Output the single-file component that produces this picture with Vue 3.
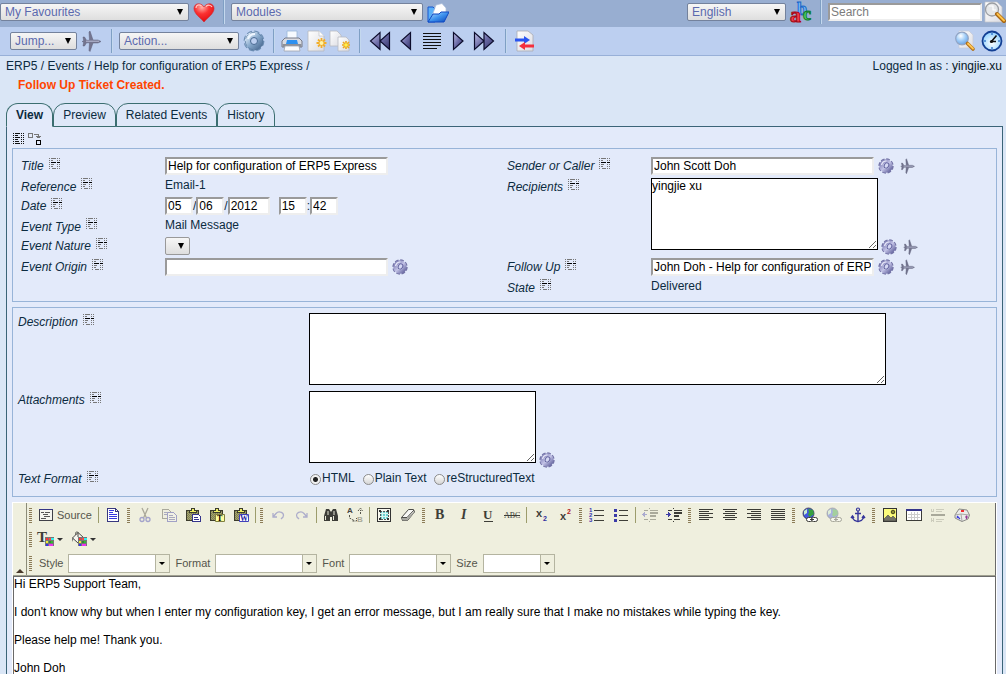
<script setup>
import { ref } from 'vue'

const tabs = ['View', 'Preview', 'Related Events', 'History']
const title = ref('Help for configuration of ERP5 Express')
const sender = ref('John Scott Doh')
const recipients = ref('yingjie xu')
const followUp = ref('John Doh - Help for configuration of ERP5 Express')
const format = ref('HTML')
const formats = ['HTML', 'Plain Text', 'reStructuredText']

const tools = [
  'doc', '|g', 'cut', 'copy', 'paste', 'pastetext', 'pasteword', '|s', '|g', 'undo', 'redo', '|s',
  'find', 'replace', '|s', 'selectall', 'eraser', '|g', 'bold', 'italic', 'underline', 'strike', '|s',
  'subscript', 'superscript', '|g', 'ol', 'ul', '|s', 'outdent', 'indent', '|g',
  'left', 'center', 'right', 'justify', '|g', 'link', 'unlink', 'anchor', '|g',
  'image', 'table', 'rule', 'universal'
]

// Letters drawn on top of the icon shapes: text, x, baseline, size, colour, style class
const letters = {
  pastetext: [['T', 8, 14, 8, '#000', 'serif']],
  pasteword: [['W', 7, 14, 8, '#26269f', 'serif']],
  replace: [['A', 0, 6, 8, '#454540', 'sans'], ['B', 10, 15, 8, '#a8a898', 'sans']],
  bold: [['B', 3, 12, 14, '#3e3e38', 'serif']],
  italic: [['I', 5, 12, 14, '#3e3e38', 'serif slant']],
  underline: [['U', 3, 12, 13, '#3e3e38', 'serif']],
  strike: [['ABC', 0, 11, 8, '#3e3e38', 'thin']],
  subscript: [['x', 3, 10, 11, '#3e3e38', 'sans'], ['2', 10, 14, 7, '#3030a0', 'sans']],
  superscript: [['x', 3, 13, 11, '#3e3e38', 'sans'], ['2', 10, 7, 7, '#b02020', 'sans']],
  ol: [['1', 0, 5, 6, '#3535b0', 'sans'], ['2', 0, 10, 6, '#3535b0', 'sans'], ['3', 0, 15, 6, '#3535b0', 'sans']]
}

const combos = [
  { name: 'Style', wide: true },
  { name: 'Format', wide: true },
  { name: 'Font', wide: true },
  { name: 'Size', wide: false }
]
</script>

<template>
  <div class="page">
    <svg class="sprite" aria-hidden="true">
      <defs>
        <linearGradient id="gNav" x1="0" y1="0" x2="1" y2="1"><stop offset="0" stop-color="#c4c4ea" /><stop offset=".5" stop-color="#6b6ba6" /><stop offset="1" stop-color="#35356b" /></linearGradient>
        <radialGradient id="gHeart" cx=".4" cy=".2" r=".8"><stop offset="0" stop-color="#ffb0a8" /><stop offset=".45" stop-color="#fb3232" /><stop offset="1" stop-color="#e00a10" /></radialGradient>
        <linearGradient id="gFolder" x1="0" y1="0" x2="1" y2="1"><stop offset="0" stop-color="#bfe4ff" /><stop offset=".5" stop-color="#3e93ee" /><stop offset="1" stop-color="#0b44b8" /></linearGradient>
        <linearGradient id="gSteel" x1="0" y1="0" x2="1" y2="1"><stop offset="0" stop-color="#dceaf8" /><stop offset=".5" stop-color="#86a8cb" /><stop offset="1" stop-color="#54749b" /></linearGradient>
        <linearGradient id="gViolet" x1="0" y1="0" x2="1" y2="1"><stop offset="0" stop-color="#8080b6" /><stop offset=".5" stop-color="#c2c2e6" /><stop offset="1" stop-color="#6a6aa2" /></linearGradient>
        <linearGradient id="gPaper" x1="0" y1="0" x2="1" y2="1"><stop offset="0" stop-color="#ffffff" /><stop offset="1" stop-color="#dcdce2" /></linearGradient>
        <radialGradient id="gLens" cx=".4" cy=".3" r=".8"><stop offset="0" stop-color="#ffffff" /><stop offset=".5" stop-color="#9ccbf8" /><stop offset="1" stop-color="#5d96dc" /></radialGradient>
        <radialGradient id="gClock" cx=".5" cy=".6" r=".6"><stop offset="0" stop-color="#ffffff" /><stop offset="1" stop-color="#8cd0ff" /></radialGradient>
        <pattern id="gTan" width="2" height="2" patternUnits="userSpaceOnUse"><rect width="2" height="2" fill="#a5a56c" /><rect width="1" height="1" fill="#7f7f55" /><rect x="1" y="1" width="1" height="1" fill="#7f7f55" /></pattern>
      </defs>

      <symbol id="heart" viewBox="0 0 22 22"><path d="M11 21C8 17 1 13 1 7.500C1 2 8 1 11 6C14 1 21 2 21 7.500C21 13 14 17 11 21Z" fill="url(#gHeart)" stroke="#d32028" stroke-width=".6" /><path d="M3 7C3 4 6 3 8.500 5M13 5.500C15 3.500 18 4 19 6" fill="none" stroke="#ffc9c4" stroke-width="1.200" /></symbol>
      <symbol id="folder" viewBox="0 0 22 22"><path d="M1 21V6H6L8 8V21Z" fill="#5cb0f8" stroke="#1657cf" /><path d="M5 15L9 4L15 2.500L19 7L19 12L12 17Z" fill="#fff" stroke="#a8bcd8" stroke-width=".7" /><path d="M1 21L6 13H12L14 11H22L17 21Z" fill="url(#gFolder)" stroke="#0f49c2" /></symbol>
      <symbol id="pagesearch" viewBox="0 0 22 22"><path d="M1 1H13L18 6V21H1Z" fill="url(#gPaper)" stroke="#c2c4ca" stroke-width=".7" /><circle cx="8" cy="8.500" r="6.500" fill="#e4e6e8" stroke="#9a9da2" stroke-width="1.300" /><path d="M5 5H9V9H12" fill="none" stroke="#fff" stroke-width="1.200" /><path d="M13 13L20 20" stroke="#a86510" stroke-width="4" stroke-linecap="round" /><path d="M13.500 13L20 19.500" stroke="#ffc34a" stroke-width="2" stroke-linecap="round" /></symbol>
      <symbol id="bluesearch" viewBox="0 0 22 22"><path d="M5 1H15L19 5V18H5Z" fill="url(#gPaper)" stroke="#c5c9d5" stroke-width=".7" /><circle cx="8" cy="8.500" r="6.300" fill="url(#gLens)" stroke="#92a5c4" stroke-width="1.200" /><path d="M13.500 13.500L19 19" stroke="#b06f18" stroke-width="3.600" stroke-linecap="round" /><path d="M14 13.500L19 18.500" stroke="#ffc654" stroke-width="1.800" stroke-linecap="round" /></symbol>
      <symbol id="clock" viewBox="0 0 22 22"><circle cx="11" cy="11" r="9.500" fill="url(#gClock)" stroke="#123f94" stroke-width="1.800" /><path d="M11 3V5M11 17V19M3 11H5M17 11H19" stroke="#3e7fd0" stroke-width="1.500" /><path d="M15.500 5.500L10.500 11.500H15" fill="none" stroke="#111" stroke-width="1.600" /><circle cx="10.500" cy="11.500" r="1.600" fill="#111" /></symbol>
      <symbol id="plane" viewBox="0 0 22 22"><path d="M2 7H3.500L5.500 10.300H8.500L8 2L9 1L12 10H17L20 11.500L17 13H12L9 21.500L8 20.500L8.500 12.800H5.500L3.500 16H2L2.700 12L1 11.500L2.700 11Z" fill="#74758f" stroke="#5c5f78" stroke-width=".5" /><path d="M5 11.200H18" stroke="#bcc0da" /></symbol>
      <symbol id="gear" viewBox="0 0 22 22"><circle cx="11" cy="11" r="9.400" fill="none" stroke="#6c8db3" stroke-width="2" stroke-dasharray="5 2.380" /><circle cx="11" cy="11" r="6.300" fill="none" stroke="url(#gSteel)" stroke-width="6.200" /><circle cx="11" cy="11" r="8.700" fill="none" stroke="#54759c" stroke-width=".7" stroke-dasharray="5 2.380" /><circle cx="11" cy="11" r="3.500" fill="#bccff0" stroke="#4a6a92" /><path d="M5 9C6 6 9 4 12 4" fill="none" stroke="#eef6ff" stroke-width="2" /></symbol>
      <symbol id="smallgear" viewBox="0 0 16 16"><circle cx="8" cy="8" r="6.900" fill="none" stroke="#7474a6" stroke-width="1.600" stroke-dasharray="3.700 1.719" /><circle cx="8" cy="8" r="4.700" fill="none" stroke="url(#gViolet)" stroke-width="4" /><ellipse cx="8.500" cy="7.500" rx="2.200" ry="2.800" transform="rotate(30 8.500 7.500)" fill="#d5d8f3" stroke="#6464a0" /><path d="M3.500 7C4 4.500 6 3 8.500 2.800" fill="none" stroke="#e6e6f8" stroke-width="1.300" /></symbol>
      <symbol id="printer" viewBox="0 0 22 22"><path d="M6 11V1H16V11Z" fill="#f6faff" stroke="#9bb6d8" stroke-width=".8" /><path d="M1 11L4 8H18L21 11V17H1Z" fill="#d9dbe2" stroke="#767b88" /><path d="M6 10H16L17 14H5Z" fill="#2e91f0" /><rect x="1.500" y="14" width="19" height="3" fill="#8c909a" /><path d="M4 16H18L19 21H3Z" fill="#fcfcfd" stroke="#a1a4ad" stroke-width=".8" /></symbol>
      <symbol id="newdoc" viewBox="0 0 22 22"><path d="M3 1H14L19 6V21H3Z" fill="url(#gPaper)" stroke="#b5b7be" stroke-width=".8" /><path d="M14 1V6H19" fill="#fff" stroke="#c4c6cc" stroke-width=".8" /><path d="M16.500 8V18M11.500 13H21.500M13 9.500L20 16.500M20 9.500L13 16.500" stroke="#f2ae2c" stroke-width="1.800" /><circle cx="16.500" cy="13" r="2" fill="#fff5a8" /></symbol>
      <symbol id="clone" viewBox="0 0 22 22"><path d="M1 1H8L12 5V16H1Z" fill="url(#gPaper)" stroke="#b8bac2" stroke-width=".8" /><path d="M9 7H17L20 10V21H9Z" fill="url(#gPaper)" stroke="#b8bac2" stroke-width=".8" /><path d="M17 11V19M13 15H21M14 12L20 18M20 12L14 18" stroke="#eda91c" stroke-width="1.600" /><circle cx="17" cy="15" r="1.800" fill="#fff04e" /></symbol>
      <symbol id="first" viewBox="0 0 22 22"><path d="M11 2.500V19.500L1.500 11ZM20.500 2.500V19.500L11 11Z" fill="url(#gNav)" stroke="#0c0c2c" stroke-width="1.200" /></symbol>
      <symbol id="prev" viewBox="0 0 22 22"><path d="M15.500 2.500V19.500L6 11Z" fill="url(#gNav)" stroke="#0c0c2c" stroke-width="1.200" /></symbol>
      <symbol id="list" viewBox="0 0 22 22"><path d="M2 3.500H20M2 6.500H20M2 9.500H20M2 12.500H20M2 15.500H20M2 18.500H16" stroke="#111" /></symbol>
      <symbol id="next" viewBox="0 0 22 22"><path d="M6.500 2.500V19.500L16 11Z" fill="url(#gNav)" stroke="#0c0c2c" stroke-width="1.200" /></symbol>
      <symbol id="last" viewBox="0 0 22 22"><path d="M1.500 2.500V19.500L11 11ZM11 2.500V19.500L20.500 11Z" fill="url(#gNav)" stroke="#0c0c2c" stroke-width="1.200" /></symbol>
      <symbol id="exchange" viewBox="0 0 22 22"><path d="M4 1H15L20 5V21H4Z" fill="url(#gPaper)" stroke="#a9abb3" stroke-width=".8" /><path d="M2 8.500H11V6L17 10L11 14V11.500H2Z" fill="#2a55f0" /><path d="M21 14.500H12V12L6 16L12 20V17.500H21Z" fill="#f4303e" /></symbol>

      <symbol id="field" viewBox="0 0 11 11" shape-rendering="crispEdges"><path d="M.5 0V11M8.500 0V11M10.500 0V11" stroke="#777" stroke-dasharray="1 1" /><path d="M2 .5H7M2 2.500H4M2 6.500H5M2 8.500H4M3 10.500H7" stroke="#777" /><path d="M2 4.500H7M8 4.500H11" stroke="#000" /></symbol>
      <symbol id="fielddark" viewBox="0 0 11 11" shape-rendering="crispEdges"><path d="M.5 0V11M8.500 0V11M10.500 0V11" stroke="#111" stroke-dasharray="1 1" /><path d="M2 .5H7M2 2.500H5M2 4.500H7M2 6.500H5M2 8.500H6M2 10.500H7" stroke="#111" /></symbol>
      <symbol id="hier" viewBox="0 0 14 14" shape-rendering="crispEdges"><path d="M.5 1.500H4.500V5.500H.5ZM6 2.500H10.500V6" fill="none" stroke="#777" /><path d="M8 4.500H13M9 5.500H12" stroke="#777" /><path d="M8.500 8.500H12.500V12.500H8.500Z" fill="none" stroke="#000" /></symbol>

      <symbol id="source" viewBox="0 0 16 16" shape-rendering="crispEdges"><rect x="1.500" y="2.500" width="13" height="11" fill="#f4f4ee" stroke="#404048" /><path d="M1 2.500H15" stroke="#353585" /><path d="M3 5.500H6M7 5.500H12M5 7.500H10M6 9.500H12M3 11.500H8" stroke="#555" /></symbol>
      <symbol id="doc" viewBox="0 0 16 16" shape-rendering="crispEdges"><path d="M2.500 1.500H10.500L13.500 4.500V14.500H2.500Z" fill="#fff" stroke="#383880" /><path d="M10.500 1.500V4.500H13.500" fill="none" stroke="#383880" /><path d="M4 3.500H9M4 5.500H8M4 7.500H12M4 9.500H12M4 11.500H12" stroke="#3838e0" /></symbol>
      <symbol id="cut" viewBox="0 0 16 16"><path d="M5 1L9.500 11M11 1L6.500 11" stroke="#aaa89a" stroke-width="1.300" /><circle cx="5" cy="12.500" r="2" fill="none" stroke="#a3a3cb" stroke-width="1.300" /><circle cx="11" cy="12.500" r="2" fill="none" stroke="#a3a3cb" stroke-width="1.300" /></symbol>
      <symbol id="copy" viewBox="0 0 16 16" shape-rendering="crispEdges"><path d="M1.500 2.500H7.500L9.500 4.500V11.500H1.500Z" fill="#eeeedf" stroke="#aaa99c" /><path d="M6.500 5.500H12.500L15.500 8.500V14.500H6.500Z" fill="#f1f1e5" stroke="#a1a1c6" /><path d="M3 5.500H7M3 7.500H6M8 8.500H12M8 10.500H14M8 12.500H14" stroke="#a9a9bd" /></symbol>
      <symbol id="clip" viewBox="0 0 16 16" shape-rendering="crispEdges"><rect x="1.500" y="3.500" width="12" height="10" fill="url(#gTan)" stroke="#3c3c2c" /><path d="M4 5V3H6V1H9V3H11V5Z" fill="#efef65" stroke="#3c3c2c" /></symbol>
      <symbol id="paste" viewBox="0 0 16 16"><use href="#clip" width="16" height="16" /><g shape-rendering="crispEdges"><path d="M7.500 7.500H13.500L15.500 9.500V14.500H7.500Z" fill="#fff" stroke="#35358c" /><path d="M9 10.500H13M9 12.500H14" stroke="#35358c" /></g></symbol>
      <symbol id="pastetext" viewBox="0 0 16 16"><use href="#clip" width="16" height="16" /><path d="M6.500 7.500H15.500V14.500H6.500Z" fill="#ffffa0" stroke="#808040" /></symbol>
      <symbol id="pasteword" viewBox="0 0 16 16"><use href="#clip" width="16" height="16" /><path d="M6.500 7.500H15.500V14.500H6.500Z" fill="#fff" stroke="#4141bb" /></symbol>
      <symbol id="undo" viewBox="0 0 16 16"><path d="M3 6V10H7M3 10L6 6.500C9 3 15 6 13 10L11 12" fill="none" stroke="#adadcb" stroke-width="1.300" /></symbol>
      <symbol id="redo" viewBox="0 0 16 16"><path d="M13 6V10H9M13 10L10 6.500C7 3 1 6 3 10L5 12" fill="none" stroke="#adadcb" stroke-width="1.300" /></symbol>
      <symbol id="find" viewBox="0 0 16 16"><path d="M3 2H6L8 5L10 2H13L15 9V14H9V10H7V14H1V9Z" fill="#3d3d38" /><path d="M2.500 9V13M10.500 9V13M5 4V8M11 4V8" stroke="#e7e7d7" fill="none" /></symbol>
      <symbol id="replace" viewBox="0 0 16 16"><path d="M2.500 8V11L7 13.500M13.500 7V3M11 4L13.500 1L15.500 4M5.500 14H9.500V11" fill="none" stroke="#55554c" stroke-dasharray="2 1" /></symbol>
      <symbol id="selectall" viewBox="0 0 16 16" shape-rendering="crispEdges"><rect x="1.500" y="1.500" width="13" height="13" fill="#f8f8ef" stroke="#333" /><rect x="4" y="4" width="8" height="8" fill="#6ccfcf" stroke="#555" stroke-dasharray="2 1" /><path d="M4 6.500H12M4 9.500H12M6.500 4V12M9.500 4V12" stroke="#d9f5f0" /><path d="M3 3H5V5H3ZM11 3H13V5H11ZM3 11H5V13H3ZM11 11H13V13H11Z" fill="#333" /></symbol>
      <symbol id="eraser" viewBox="0 0 16 16"><path d="M1.500 10.500L8.500 2.500H13.500L14.500 5L7.500 13.500H2.500Z" fill="#f8f8f5" stroke="#4c4c48" /><path d="M2 11H7L14 4.500V6L7 13.500H3Z" fill="#a9a9a2" /><path d="M1.500 10.500H7L14 3" fill="none" stroke="#4c4c48" /></symbol>
      <symbol id="underline" viewBox="0 0 16 16"><path d="M4 14.500H13" stroke="#3e3e38" /></symbol>
      <symbol id="strike" viewBox="0 0 16 16"><path d="M0 8.500H16" stroke="#3e3e38" /></symbol>
      <symbol id="ol" viewBox="0 0 16 16" shape-rendering="crispEdges"><path d="M5 3.500H15M5 8.500H15M5 13.500H15" stroke="#3e3e38" /></symbol>
      <symbol id="ul" viewBox="0 0 16 16" shape-rendering="crispEdges"><path d="M1 2H4V5H1ZM1 7H4V10H1ZM1 12H4V15H1Z" fill="#3a3aa8" /><path d="M6 3.500H15M6 8.500H15M6 13.500H15" stroke="#3e3e38" /></symbol>
      <symbol id="outdent" viewBox="0 0 16 16" shape-rendering="crispEdges"><path d="M2 3.500H6M8 3.500H16M2 12.500H6M8 12.500H14M7.500 1V2M7.500 14V15" stroke="#aaaa9c" /><path d="M8 6H16M8 9H14" stroke="#aaaa9c" stroke-width="2" /><path d="M0 7.500H5M1 6.500H3M1 8.500H3M2.500 5V10" stroke="#ababcf" /></symbol>
      <symbol id="indent" viewBox="0 0 16 16" shape-rendering="crispEdges"><path d="M2 3.500H6M8 3.500H16M2 12.500H6M8 12.500H14M7.500 1V2M7.500 14V15" stroke="#3b3b36" /><path d="M8 6H16M8 9H13" stroke="#3b3b36" stroke-width="2" /><path d="M0 7.500H5M2 6.500H4M2 8.500H4M2.500 5V10" stroke="#3c3ca5" /></symbol>
      <symbol id="left" viewBox="0 0 16 16" shape-rendering="crispEdges"><path d="M1 2.500H15M1 4.500H11M1 6.500H15M1 8.500H11M1 10.500H15M1 12.500H11" stroke="#3b3b36" /></symbol>
      <symbol id="center" viewBox="0 0 16 16" shape-rendering="crispEdges"><path d="M1 2.500H15M3 4.500H13M1 6.500H15M3 8.500H13M1 10.500H15M3 12.500H13" stroke="#3b3b36" /></symbol>
      <symbol id="right" viewBox="0 0 16 16" shape-rendering="crispEdges"><path d="M1 2.500H15M5 4.500H15M1 6.500H15M5 8.500H15M1 10.500H15M5 12.500H15" stroke="#3b3b36" /></symbol>
      <symbol id="justify" viewBox="0 0 16 16" shape-rendering="crispEdges"><path d="M1 2.500H15M1 4.500H15M1 6.500H15M1 8.500H15M1 10.500H15M1 12.500H15" stroke="#3b3b36" /></symbol>
      <symbol id="link" viewBox="0 0 16 16"><circle cx="6.500" cy="6.500" r="5.500" fill="#4157e0" stroke="#334" stroke-width=".8" /><path d="M6 2L11 3L12 7L8 10L6 8L7 5Z" fill="#37a03e" /><path d="M2 4L5 2V6L2 8Z" fill="#c6ecd0" /><g fill="#fff" stroke="#3a3a36"><rect x="4.500" y="10.500" width="6" height="4" rx="2" /><rect x="9.500" y="10.500" width="6" height="4" rx="2" /></g><path d="M8 12.500H12" stroke="#3a3a36" /></symbol>
      <symbol id="unlink" viewBox="0 0 16 16"><use href="#link" width="16" height="16" opacity=".4" /></symbol>
      <symbol id="anchor" viewBox="0 0 16 16"><circle cx="8" cy="2.500" r="1.500" fill="none" stroke="#35359a" stroke-width="1.200" /><path d="M8 4V14M5 6.500H11M2.500 9V11C4 14 6 14 8 14.500C10 14 12 14 13.500 11V9M1 11L2.500 9L4 11M12 11L13.500 9L15 11" fill="none" stroke="#35359a" stroke-width="1.400" /></symbol>
      <symbol id="image" viewBox="0 0 16 16"><rect x="1.500" y="1.500" width="13" height="13" fill="#fcfc7c" stroke="#333" /><path d="M2 14V12L6 8L9 11L11 9L14 12V14Z" fill="#74746a" stroke="#44443e" stroke-width=".6" /><circle cx="11" cy="5" r="1.800" fill="#909030" stroke="#44441c" /></symbol>
      <symbol id="table" viewBox="0 0 16 16" shape-rendering="crispEdges"><rect x=".5" y="2.500" width="15" height="11" fill="#fff" stroke="#3c3c38" /><path d="M0 3H16" stroke="#35358a" stroke-width="2" /><path d="M2 7.500H14M2 10.500H14M5.500 5V13M8.500 5V13M11.500 5V13" stroke="#ccc" /></symbol>
      <symbol id="rule" viewBox="0 0 16 16" shape-rendering="crispEdges"><path d="M1 8H15" stroke="#a8a89a" stroke-width="2" /><path d="M6 2.500H14M6 4.500H12M6 12.500H14M6 14.500H12M1 4.500H4M1.500 2V5M3.500 2V5M1 13.500H4M1.500 11V15M3.500 11V15" stroke="#ccccbc" /></symbol>
      <symbol id="universal" viewBox="0 0 16 16"><path d="M1 8L5 2L13 3L15.500 8L14 12L8 14.500L1 11Z" fill="#ececea" stroke="#8a8a86" /><path d="M1 8L7 7L15 8M7 7L8 14" fill="none" stroke="#a9a9a4" /><rect x="7" y="3" width="3" height="2" fill="#f03030" /><path d="M3 9L6 12M3 11L4 9" stroke="#3c3cdd" stroke-width="1.200" /><path d="M11 10H14M12.500 8.500V12" stroke="#963c96" stroke-width="1.200" /></symbol>
      <symbol id="palette" viewBox="0 0 16 16" shape-rendering="crispEdges"><rect x="7" y="6" width="9" height="9" fill="#777" /><path d="M8 7H10V9H8Z" fill="#f33" /><path d="M11 7H13V9H11Z" fill="#f44" /><path d="M13 7H16V9H13Z" fill="#3ee" /><path d="M8 10H10V12H8Z" fill="#ee3" /><path d="M11 10H13V12H11Z" fill="#383" /><path d="M13 10H15V12H13Z" fill="#3b3" /><path d="M8 13H10V15H8Z" fill="#33e" /><path d="M11 13H15V15H11Z" fill="#e3e" /></symbol>
      <symbol id="fillcolor" viewBox="0 0 16 16"><path d="M1.500 7L7 1.500L13 7L7 12Z" fill="#f6f6ef" stroke="#4a4a44" /><path d="M7 6V1.500C5 0 4 2 5 4M12 6L13 10" fill="none" stroke="#4a4a44" /><path d="M1 7V11L3 7Z" fill="#777" /><use href="#palette" width="16" height="16" /></symbol>
    </svg>

    <header>
      <div class="bar bar-main">
        <span class="pick favourites"><select aria-label="Favourites"><option>My Favourites</option></select></span>
        <button class="icon" aria-label="Open favourite"><svg><use href="#heart" /></svg></button>
        <i class="sep"></i>
        <span class="pick modules"><select aria-label="Modules"><option>Modules</option></select></span>
        <button class="icon" aria-label="Open module"><svg><use href="#folder" /></svg></button>
        <span class="pick language push"><select aria-label="Language"><option>English</option></select></span>
        <button class="icon" aria-label="Change language">
          <svg viewBox="0 0 22 22" class="abc">
            <text x="7" y="14" font-size="18" fill="#78bdf8" stroke="#1b67c8">b</text>
            <text x="0" y="21" font-size="22" fill="#f2404a" stroke="#a80616">a</text>
            <text x="13" y="19" font-size="18" fill="#57d267" stroke="#0e7b26">c</text>
          </svg>
        </button>
        <i class="sep"></i>
        <input class="text search" type="text" placeholder="Search" aria-label="Search">
        <button class="icon tight" aria-label="Run search"><svg><use href="#pagesearch" /></svg></button>
      </div>
      <div class="bar bar-context">
        <span class="pick jump"><select aria-label="Jump"><option>Jump...</option></select></span>
        <button class="icon" aria-label="Jump"><svg><use href="#plane" /></svg></button>
        <i class="sep"></i>
        <span class="pick action"><select aria-label="Action"><option>Action...</option></select></span>
        <button class="icon" aria-label="Run action"><svg><use href="#gear" /></svg></button>
        <i class="sep"></i>
        <div class="group">
          <button v-for="n in ['printer', 'newdoc', 'clone']" :key="n" class="icon" :aria-label="n"><svg><use :href="'#' + n" /></svg></button>
        </div>
        <i class="sep"></i>
        <div class="group nav">
          <button v-for="n in ['first', 'prev', 'list', 'next', 'last']" :key="n" class="icon" :aria-label="n"><svg><use :href="'#' + n" /></svg></button>
        </div>
        <i class="sep"></i>
        <button class="icon flush" aria-label="Import and export"><svg><use href="#exchange" /></svg></button>
        <div class="group push tools-right">
          <button class="icon" aria-label="Find"><svg><use href="#bluesearch" /></svg></button>
          <button class="icon" aria-label="History"><svg><use href="#clock" /></svg></button>
        </div>
      </div>
    </header>

    <div class="crumbs">
      <nav><a href="#">ERP5</a> / <a href="#">Events</a> / <a href="#">Help for configuration of ERP5 Express</a> /</nav>
      <span>Logged In as : <b>yingjie.xu</b></span>
    </div>
    <p class="message">Follow Up Ticket Created.</p>

    <nav class="tabs">
      <a v-for="(t, i) in tabs" :key="t" href="#" :class="{ active: i === 0 }">{{ t }}</a>
    </nav>

    <main class="panel">
      <div class="modes">
        <svg class="fi"><use href="#fielddark" /></svg>
        <svg class="hi"><use href="#hier" /></svg>
      </div>

      <section class="box halves">
        <div>
          <div class="row"><label for="title">Title <svg class="fi"><use href="#field" /></svg></label><input id="title" v-model="title" class="text std" type="text"></div>
          <div class="row plain"><span class="label">Reference <svg class="fi"><use href="#field" /></svg></span><span>Email-1</span></div>
          <div class="row">
            <label for="month">Date <svg class="fi"><use href="#field" /></svg></label>
            <input id="month" class="text two" value="05"><span>/</span><input class="text two" value="06" aria-label="Day"><span>/</span><input class="text four" value="2012" aria-label="Year"><input class="text two hour" value="15" aria-label="Hour"><span>:</span><input class="text two" value="42" aria-label="Minute">
          </div>
          <div class="row plain"><span class="label">Event Type <svg class="fi"><use href="#field" /></svg></span><span>Mail Message</span></div>
          <div class="row deep"><label for="nature">Event Nature <svg class="fi"><use href="#field" /></svg></label><span class="pick nature"><select id="nature"><option></option></select></span></div>
          <div class="row deep"><label for="origin">Event Origin <svg class="fi"><use href="#field" /></svg></label><input id="origin" class="text std" type="text"><button class="mini" aria-label="Select origin"><svg><use href="#smallgear" /></svg></button></div>
        </div>
        <div>
          <div class="row deep"><label for="sender">Sender or Caller <svg class="fi"><use href="#field" /></svg></label><input id="sender" v-model="sender" class="text std" type="text"><button class="mini" aria-label="Select sender"><svg><use href="#smallgear" /></svg></button><button class="mini fly" aria-label="Go to sender"><svg><use href="#plane" /></svg></button></div>
          <div class="row tall"><label for="recipients">Recipients <svg class="fi"><use href="#field" /></svg></label><textarea id="recipients" v-model="recipients"></textarea><button class="mini" aria-label="Select recipients"><svg><use href="#smallgear" /></svg></button><button class="mini fly" aria-label="Go to recipient"><svg><use href="#plane" /></svg></button></div>
          <div class="row"><label for="follow">Follow Up <svg class="fi"><use href="#field" /></svg></label><input id="follow" v-model="followUp" class="text std" type="text"><button class="mini" aria-label="Select ticket"><svg><use href="#smallgear" /></svg></button><button class="mini fly" aria-label="Go to ticket"><svg><use href="#plane" /></svg></button></div>
          <div class="row plain"><span class="label">State <svg class="fi"><use href="#field" /></svg></span><span>Delivered</span></div>
        </div>
      </section>

      <section class="box wide">
        <div class="row"><label for="desc">Description <svg class="fi"><use href="#field" /></svg></label><textarea id="desc" class="long"></textarea></div>
        <div class="row tall"><label for="attach">Attachments <svg class="fi"><use href="#field" /></svg></label><textarea id="attach"></textarea><button class="mini" aria-label="Select attachment"><svg><use href="#smallgear" /></svg></button></div>
        <div class="row" role="radiogroup" aria-label="Text Format">
          <span class="label">Text Format <svg class="fi"><use href="#field" /></svg></span>
          <label v-for="f in formats" :key="f" class="radio"><input v-model="format" type="radio" name="format" :value="f">{{ f }}</label>
        </div>
      </section>

      <section class="editor">
        <div class="toolbar">
          <button class="collapse" aria-label="Collapse toolbar"><i></i></button>
          <div class="lines">
            <div class="line">
              <i class="grip"></i>
              <button class="source"><svg><use href="#source" /></svg>Source</button>
              <i class="rule"></i>
              <template v-for="(t, i) in tools" :key="i">
                <i v-if="t === '|g'" class="grip"></i>
                <i v-else-if="t === '|s'" class="rule"></i>
                <button v-else class="tool" :aria-label="t">
                  <svg viewBox="0 0 16 16">
                    <use :href="'#' + t" width="16" height="16" />
                    <text v-for="l in letters[t]" :key="l[0]" :x="l[1]" :y="l[2]" :font-size="l[3]" :fill="l[4]" :class="l[5]">{{ l[0] }}</text>
                  </svg>
                </button>
              </template>
            </div>
            <div class="line">
              <i class="grip"></i>
              <button class="color" aria-label="Text colour">
                <svg viewBox="0 0 16 16"><text x="-1" y="11" font-size="15" fill="#3e3e38" class="serif">T</text><use href="#palette" width="16" height="16" /></svg><i></i>
              </button>
              <button class="color" aria-label="Background colour"><svg><use href="#fillcolor" /></svg><i></i></button>
            </div>
            <div class="line">
              <i class="grip"></i>
              <label v-for="c in combos" :key="c.name" class="combo">{{ c.name }}<span :class="{ long: c.wide }"><select><option></option></select></span></label>
            </div>
          </div>
        </div>
        <div class="content" contenteditable="true" spellcheck="false">
          <p>Hi ERP5 Support Team,</p>
          <p>I don't know why but when I enter my configuration key, I get an error message, but I am really sure that I make no mistakes while typing the key.</p>
          <p>Please help me! Thank you.</p>
          <p>John Doh</p>
        </div>
      </section>
    </main>
  </div>
</template>

<style>
body { margin: 0; background: #dae6f6; }
</style>

<style scoped>
* { box-sizing: border-box; }
.page { display: flex; flex-direction: column; height: 100vh; overflow: hidden; background: #dae6f6; color: #0c2b40; font: 12px/16px "Liberation Sans", Arial, sans-serif; }
.sprite { position: absolute; width: 0; height: 0; }
button, input, select, textarea { font: inherit; margin: 0; }
button { display: flex; align-items: center; justify-content: center; padding: 0; border: 0; background: none; cursor: pointer; }
svg { display: block; flex: none; overflow: visible; }
a { color: inherit; text-decoration: none; }
.serif { font-family: "Liberation Serif", serif; font-weight: bold; }
.slant { font-style: italic; }
.thin { font-family: "Liberation Serif", serif; }
.sans { font-family: "Liberation Sans", sans-serif; font-weight: bold; }
.abc { font-family: "Liberation Serif", serif; font-weight: bold; stroke-width: 1px; }

.bar { display: flex; align-items: center; }
.bar-main { height: 27px; padding-bottom: 3px; background: #98aed1; }
.bar-context { height: 29px; padding: 0 3px 1px 10px; background: #bccff0; border-bottom: 1px solid #98b0d8; }
.push { margin-left: auto; }
.pick { position: relative; display: block; flex: none; height: 18px; }
.pick select { appearance: none; display: block; width: 100%; height: 18px; padding: 0 4px; border: 1px solid #74829c; border-radius: 2px; background: linear-gradient(#f6f6f6, #dedede); color: #5b69ae; line-height: 16px; }
.pick::after { content: ""; position: absolute; right: 6px; top: 6px; border: 3px solid transparent; border-top: 6px solid #000; border-bottom: 0; pointer-events: none; }
.favourites { width: 189px; }
.modules { width: 192px; }
.language { width: 99px; }
.jump { width: 67px; }
.action { width: 120px; }
.icon { flex: none; width: 22px; height: 22px; margin-left: 4px; }
.icon svg { width: 22px; height: 22px; }
.icon.tight { margin-left: 2px; }
.icon.flush { margin-left: 0; }
.sep { flex: none; width: 2px; height: 24px; margin: 0 6px 0 8px; border-left: 1px solid #7f9fc4; background: #c4d8ee; }
.group { display: flex; gap: 2px; }
.group .icon { margin-left: 0; }
.nav { gap: 0; }
.nav .icon { width: 26px; }
.tools-right { gap: 5px; }
.text { height: 18px; padding: 0 1px; border: 2px solid; border-color: #9a9a9a #eee #eee #9a9a9a; border-radius: 0; background: #fff; color: #000; }
.search { width: 154px; }
.search::placeholder { color: #7c7c7c; }

.crumbs { display: flex; justify-content: space-between; padding: 2px 4px 0 6px; }
.crumbs b { font-weight: normal; color: #061826; }
.message { margin: 3px 18px 10px; color: #ff4500; font-weight: bold; }

.tabs { display: flex; margin: 0 6px -1px; position: relative; z-index: 1; }
.tabs a { height: 24px; padding: 0 9px; border: 1px solid #3b6e70; border-radius: 12px 12px 0 0; background: #dee8f8; line-height: 22px; }
.tabs .active { border-bottom-color: #e3eafa; background: #e3eafa; font-weight: bold; }
.panel { display: flex; flex: 1; flex-direction: column; min-height: 0; margin: 0 3px 0 6px; padding: 5px 5px 0; border: 1px solid #3b6478; border-bottom: 0; background: #e3eafa; }
.modes { display: flex; gap: 4px; height: 16px; padding-left: 1px; }
.fi { width: 11px; height: 11px; }
.modes .fi { margin-top: 1px; }
.hi { width: 14px; height: 14px; }

.box { flex: none; margin-bottom: 5px; border: 1px solid #98b4d8; }
.halves { display: grid; grid-template-columns: 1fr 1fr; gap: 5px; padding: 8px 8px 3px; }
.row { display: flex; height: 20px; line-height: 18px; }
.row > label:first-child, .label { display: flex; flex: none; gap: 5px; width: 144px; height: 18px; font-style: italic; }
.label .fi, .row label .fi { margin-top: 1px; }
.row.plain { line-height: 16px; }
.row.plain .label { line-height: 20px; }
.row.deep { height: 21px; }
.halves .tall { height: 80px; }
.std { width: 223px; }
.two { width: 28px; }
.four { width: 42px; }
.hour { margin-left: 9px; }
.nature { width: 25px; }
.nature select { border-color: #999; }
textarea { display: block; width: 227px; height: 72px; padding: 0; border: 1px solid #000; border-radius: 0; background: #fff; color: #000; line-height: 15px; }
.mini { flex: none; width: 16px; height: 16px; margin: 1px 0 0 4px; }
.mini svg { width: 16px; height: 16px; }
.fly { margin-left: 6px; }
.tall .mini { margin-top: 61px; margin-left: 3px; }
.tall .fly { margin-left: 6px; }

.wide { padding: 5px 5px 7px; }
.wide .row { height: 78px; }
.wide .row:last-child { height: 20px; padding-top: 1px; }
.wide .row > label:first-child, .wide .label { width: 291px; }
.wide .long { width: 577px; }
.radio { display: flex; align-items: center; height: 16px; margin-right: 7px; }
.radio input { appearance: none; width: 11px; height: 11px; margin: 3px 1px 0; border: 1px solid #8b8b8b; border-radius: 50%; background: linear-gradient(#fff, #d5d5d5); }
.radio input:checked { background: radial-gradient(circle, #222 0 2px, #f2f2f2 3px); }

.editor { display: flex; flex: 1; flex-direction: column; min-height: 0; border: 1px solid #fff; border-bottom: 0; }
.toolbar { display: flex; background: #efefde; border-right: 1px solid #696969; border-bottom: 1px solid #a0a090; }
.collapse { align-items: flex-end; width: 14px; padding-bottom: 2px; border-right: 1px solid #8c8c78; }
.collapse i { border: 4px solid transparent; border-bottom: 4px solid #49392b; border-top: 0; }
.line { display: flex; align-items: center; height: 24px; }
.grip { flex: none; width: 3px; height: 15px; margin: 0 3px 0 2px; background: repeating-linear-gradient(#8c7c58 0 1px, #efefde 1px 2px); }
.rule { flex: none; width: 1px; height: 16px; margin: 0 2px; background: #9c9c6c; }
.tool { flex: none; width: 24px; height: 24px; }
.tool svg, .source svg, .color svg { width: 16px; height: 16px; }
.source { gap: 3px; padding: 0 4px 0 3px; color: #55554c; font-size: 11px; }
.color { gap: 3px; padding: 0 5px 0 3px; }
.color i { border: 3px solid transparent; border-top: 3px solid #333; border-bottom: 0; }
.combo { display: flex; align-items: center; gap: 5px; padding: 0 1px 0 4px; color: #55554c; font-size: 11px; }
.combo span { position: relative; width: 72px; }
.combo .long { width: 102px; }
.combo select { appearance: none; display: block; width: 100%; height: 19px; padding: 0 16px 0 2px; border: 1px solid #b4b4a0; border-radius: 0; background: linear-gradient(90deg, #b4b4a0 1px, #efefde 1px) right / 14px 100% no-repeat, #fff; }
.combo span::after { content: ""; position: absolute; right: 5px; top: 8px; border: 3px solid transparent; border-top: 3px solid #000; border-bottom: 0; pointer-events: none; }
.content { flex: 1; min-height: 0; overflow: hidden; border: 1px solid #696969; border-bottom: 0; background: #fff; color: #000; line-height: 14px; outline: none; }
.content p { margin: 0 0 14px; }
</style>
